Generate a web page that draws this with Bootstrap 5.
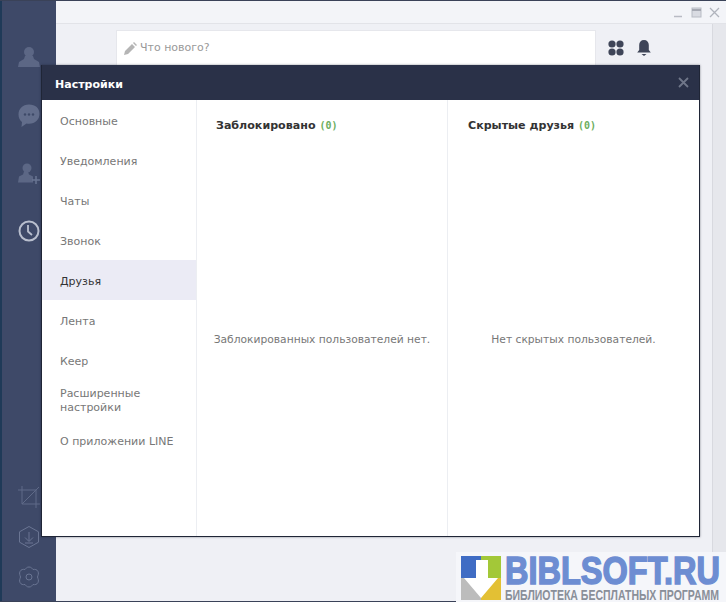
<!DOCTYPE html>
<html lang="ru">
<head>
<meta charset="utf-8">
<title>Настройки</title>
<link rel="stylesheet" href="https://cdn.jsdelivr.net/npm/bootstrap@5.3.0/dist/css/bootstrap.min.css">
<style>
html,body{height:602px;overflow:hidden;}
body{font-family:"DejaVu Sans","Liberation Sans",sans-serif;font-size:11px;background:#eff0f5;color:#777;}
.app-shell{height:602px;border-top:1px solid #3a4258;border-bottom:1px solid #3a4258;}
.rail{width:56px;background:#3e4968;border-left:2px solid #1f3a58;padding:44px 0 12px;}
.rail-top{gap:34px;}
.rail-bottom{gap:16px;}
.rail svg{display:block;width:24px;height:24px;margin-left:-1px;}
.main-area{min-width:0;}
.win-bar{height:23px;background:#f3f4f8;border-bottom:1px solid #e2e3e8;padding-right:6px;gap:7px;}
.win-bar svg{width:11px;height:11px;display:block;}
.post-row{padding:6px 0 0 60px;}
.post-box{width:480px;height:36px;background:#fff;border:1px solid #e6e7ec;padding-left:7px;gap:3px;color:#999;font-size:11px;}
.post-tools{margin-left:12px;gap:13px;height:36px;}
.scroll-edge{position:absolute;left:712px;top:24px;width:14px;height:530px;background:#e6e7ec;border-left:1px solid #d8d9df;}
.dlg{position:absolute;left:41px;top:65px;width:659px;height:472px;background:#fff;border:1px solid #1f2536;border-top:0;box-shadow:0 0 2px rgba(20,25,40,.5);}
.dlg-head{height:35px;background:#2a3148;color:#fff;padding:5px 10px 0 13px;font-size:11px;font-weight:700;}
.dlg-x{width:11px;height:11px;display:block;margin-top:-6px;}
.dlg-nav{width:155px;border-right:1px solid #eceef2;}
.dlg-nav-item{height:40px;padding:3px 0 0 18px;color:#777;font-size:11px;line-height:14px;}
.dlg-nav-item.tall{height:27px;margin:6.5px 0;padding-top:0;}
.dlg-nav-item.on{background:#ebebf5;color:#333;}
.pane{width:250px;}
.pane+.pane{border-left:1px solid #eceef2;width:252px;}
.pane-title{padding:19px 0 0 19px;font-size:11.1px;font-weight:700;color:#333;line-height:14px;}
.pane+.pane .pane-title{padding-left:20px;}
.pane-count{color:#6cae5d;font-weight:700;font-family:"DejaVu Sans Mono",monospace;font-size:10px;}
.pane-empty{color:#777;font-size:10.7px;padding-top:11px;}
.wm{position:absolute;left:456px;top:552px;width:270px;height:50px;background:#f5f6fa;padding:4px 0 0 5px;gap:4px;overflow:hidden;}
.wm-logo{width:40px;height:44px;display:block;}
.wm-text{width:221px;height:46px;display:block;}
.wm-name{font-family:"Liberation Sans",sans-serif;font-weight:700;font-size:38px;fill:#6d8dd2;stroke:#6d8dd2;stroke-width:1.5px;}
.wm-sub{font-family:"Liberation Sans",sans-serif;font-size:15px;font-weight:700;fill:#8a8f99;}
</style>
</head>
<body>
<div class="app-shell d-flex">
  <div class="rail d-flex flex-column justify-content-between align-items-center flex-shrink-0">
    <div class="rail-top d-flex flex-column">
      <svg viewBox="0 0 24 24" fill="#5c6785"><circle cx="12" cy="7" r="5"/><path d="M8 11l-1 3-5 3-1 5h22l-1-5-5-3-1-3z"/></svg>
      <svg viewBox="0 0 24 24" fill="#626d8b"><path d="M12 1.500C5.500 1.500 1.500 6 1.500 11.500c0 3.500 1.500 6 3.500 7.500l-.5 5 5-3.500c1 .2 1.600.3 2.500.3 6.500 0 10.500-4.500 10.500-10S18.500 1.500 12 1.500z"/><circle cx="8" cy="11.500" r="1.200" fill="#3e4968"/><circle cx="12" cy="11.500" r="1.200" fill="#3e4968"/><circle cx="16" cy="11.500" r="1.200" fill="#3e4968"/></svg>
      <svg viewBox="0 0 24 24" fill="#5c6785"><circle cx="10" cy="7" r="4.500"/><path d="M7 10.500l-1 3-4 2-1 6h15v-6l-4-2-1-3z"/><path d="M15 19h8M19 15v8" stroke="#6a7593" stroke-width="1.500" fill="none"/></svg>
      <svg viewBox="0 0 24 24" fill="none" stroke="#b9bfce" stroke-width="2"><circle cx="12" cy="12" r="9.500"/><path d="M11 6v6.500l4 3.500" stroke-width="1.800"/></svg>
    </div>
    <div class="rail-bottom d-flex flex-column">
      <svg viewBox="0 0 24 24" fill="none" stroke="#5f6a88" stroke-width="1"><path d="M5 1v18h18M1 5h18v18M5 19L19 5M19 5l3-3"/></svg>
      <svg viewBox="0 0 24 24" fill="none" stroke="#6a7593" stroke-width="1"><path d="M12 1.500l9.500 5.300v10.400L12 22.500l-9.500-5.300V6.800z"/><path d="M12 7v9M8 12.500l4 4 4-4M8 18h8"/></svg>
      <svg viewBox="0 0 24 24" fill="none" stroke="#6a7593" stroke-width="1"><circle cx="12" cy="12" r="3"/><path d="M12 2C14.500 2 15 3.500 16 4.500 18 4 20 4.500 21 6.500 22 8.500 21 10 20.500 12 21 14 22 15.500 21 17.500 20 19.500 18 20 16 19.500 15 20.500 14.500 22 12 22 9.500 22 9 20.500 8 19.500 6 20 4 19.500 3 17.500 2 15.500 3 14 3.500 12 3 10 2 8.500 3 6.500 4 4.500 6 4 8 4.500 9 3.500 9.500 2 12 2z"/></svg>
    </div>
  </div>
  <div class="main-area flex-grow-1">
    <div class="win-bar d-flex justify-content-end align-items-center">
      <svg viewBox="0 0 11 11"><path d="M1 9.500h8" stroke="#b8bbc4" stroke-width="1.500"/></svg>
      <svg viewBox="0 0 11 11"><rect x="1" y="1" width="9" height="9" fill="#d9dbe2" stroke="#b8bbc4"/><path d="M1 3h9" stroke="#a6a9b3" stroke-width="2"/></svg>
      <svg viewBox="0 0 11 11"><path d="M1 1l9 9M10 1l-9 9" stroke="#b0b3bc" stroke-width="1.300"/></svg>
    </div>
    <div class="post-row d-flex align-items-start">
      <div class="post-box d-flex align-items-center">
        <svg width="13" height="13" viewBox="0 0 13 13" fill="#b5b5b5"><path d="M0 13l1-4L8 2l3 3-7 7zM9 1l1-1 3 3-1 1z"/></svg>
        <span>Что нового?</span>
      </div>
      <div class="post-tools d-flex align-items-center">
        <svg width="16" height="16" viewBox="0 0 16 16" fill="#3f4558"><circle cx="4" cy="4" r="3.600"/><circle cx="12" cy="4" r="3.600"/><circle cx="4" cy="12" r="3.600"/><circle cx="12" cy="12" r="3.600"/></svg>
        <svg width="14" height="16" viewBox="0 0 14 16" fill="#3f4558"><path d="M7 0c3 0 4.800 2 4.800 5v5l2 2.500H.2l2-2.500V5C2.200 2 4 0 7 0z"/><path d="M4.500 14h5L7 16z"/></svg>
      </div>
    </div>
  </div>
</div>
<div class="scroll-edge"></div>

<div class="dlg d-flex flex-column">
  <div class="dlg-head d-flex justify-content-between align-items-center flex-shrink-0">
    <span>Настройки</span>
    <svg class="dlg-x" viewBox="0 0 11 11"><path d="M1 1l9 9M10 1l-9 9" stroke="#6f7689" stroke-width="1.800"/></svg>
  </div>
  <div class="d-flex flex-grow-1">
    <div class="dlg-nav flex-shrink-0">
      <div class="dlg-nav-item d-flex align-items-center">Основные</div>
      <div class="dlg-nav-item d-flex align-items-center">Уведомления</div>
      <div class="dlg-nav-item d-flex align-items-center">Чаты</div>
      <div class="dlg-nav-item d-flex align-items-center">Звонок</div>
      <div class="dlg-nav-item on d-flex align-items-center">Друзья</div>
      <div class="dlg-nav-item d-flex align-items-center">Лента</div>
      <div class="dlg-nav-item d-flex align-items-center">Кеер</div>
      <div class="dlg-nav-item tall">Расширенные<br>настройки</div>
      <div class="dlg-nav-item d-flex align-items-center">О приложении LINE</div>
    </div>
    <div class="pane d-flex flex-column flex-shrink-0">
      <div class="pane-title">Заблокировано <span class="pane-count">(0)</span></div>
      <div class="pane-empty flex-grow-1 d-flex align-items-center justify-content-center">Заблокированных пользователей нет.</div>
    </div>
    <div class="pane d-flex flex-column flex-shrink-0">
      <div class="pane-title">Скрытые друзья <span class="pane-count">(0)</span></div>
      <div class="pane-empty flex-grow-1 d-flex align-items-center justify-content-center">Нет скрытых пользователей.</div>
    </div>
  </div>
</div>

<div class="wm d-flex">
  <svg class="wm-logo flex-shrink-0" viewBox="0 0 40 44">
    <rect width="20" height="22" fill="#3f6cc4"/><rect x="20" width="20" height="22" fill="#a3c838"/>
    <rect y="22" width="20" height="22" fill="#bcbcbc"/><rect x="20" y="22" width="20" height="22" fill="#e3c034"/>
    <path d="M15 4h12v18h10L20 42 3 22h12z" fill="#fff"/>
  </svg>
  <svg class="wm-text flex-shrink-0" viewBox="0 0 221 46">
    <text class="wm-name" x="0" y="28" textLength="215" lengthAdjust="spacingAndGlyphs">BIBLSOFT.RU</text>
    <text class="wm-sub" x="0" y="44" textLength="214" lengthAdjust="spacingAndGlyphs">БИБЛИОТЕКА БЕСПЛАТНЫХ ПРОГРАММ</text>
  </svg>
</div>
<script src="https://cdn.jsdelivr.net/npm/bootstrap@5.3.0/dist/js/bootstrap.bundle.min.js"></script>
</body>
</html>
